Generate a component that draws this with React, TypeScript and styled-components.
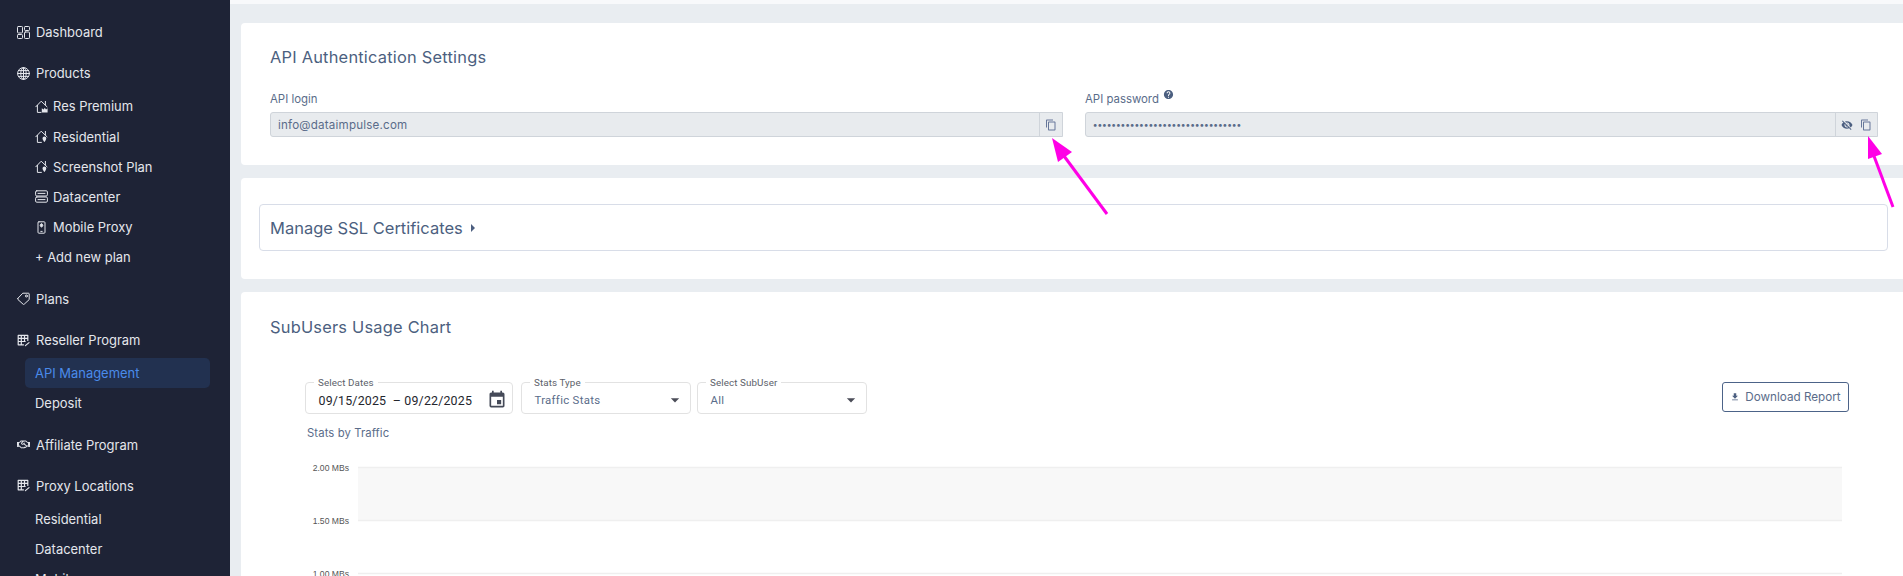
import React from 'react';
import styled, { createGlobalStyle } from 'styled-components';
import { MdArrowDropDown, MdContentCopy, MdEvent, MdFileDownload, MdHelp, MdVisibilityOff } from 'react-icons/md';
import { FaRegHandshake } from 'react-icons/fa';

const GlobalStyle = createGlobalStyle`
  html, body { margin: 0; height: 576px; overflow: hidden; background: #e9edf1; }
  body { font-family: Inter, "Liberation Sans", sans-serif; }
  * { box-sizing: border-box; }
`;

const Page = styled.div`
  display: flex;
  height: 576px;
  overflow: hidden;
  position: relative;
`;

const Sidebar = styled.nav`
  width: 230px;
  flex: none;
  background: #1e2336;
  padding: 17px 20px 0 17px;
  display: flex;
  flex-direction: column;
  gap: 11.3px;
  color: #e4e6ec;
  font-size: 12.95px;
`;

const Section = styled.div`
  display: flex;
  flex-direction: column;
`;

const Head = styled.div`
  height: 30px;
  display: flex;
  align-items: center;
  gap: 6px;
  flex: none;

  svg { width: 13px; height: 13px; flex: none; }
`;

const SubList = styled.div`
  display: flex;
  flex-direction: column;
  margin-top: 3px;
`;

const Sub = styled.div<{ $active?: boolean }>`
  height: 30.2px;
  flex: none;
  display: flex;
  align-items: center;
  gap: 5px;
  margin-left: 8px;
  padding-left: 10px;
  border-radius: 5px;
  background: ${p => (p.$active ? '#223150' : 'transparent')};
  color: ${p => (p.$active ? '#4a8bea' : 'inherit')};

  svg { width: 13px; height: 13px; flex: none; }
`;

const Main = styled.main`
  flex: 1;
  min-width: 0;
  display: flex;
  flex-direction: column;
  background: #e9edf1;
`;

const TopStrip = styled.div`
  height: 4px;
  flex: none;
  background: #f8f9fb;
`;

const Cards = styled.div`
  padding: 19px 0 0 11px;
  display: flex;
  flex-direction: column;
  gap: 13px;
`;

const Card = styled.section<{ $h?: number }>`
  background: #fff;
  border-radius: 4px 0 0 4px;
  flex: none;
  height: ${p => (p.$h ? `${p.$h}px` : 'auto')};
`;

const AuthCard = styled(Card)`
  padding: 24px 25px 0 29px;
`;

const Title = styled.h2`
  margin: 0;
  font-size: 16.4px;
  line-height: 20px;
  font-weight: 400;
  color: #4c5f80;
  letter-spacing: 0.22px;
`;

const Fields = styled.div`
  display: grid;
  grid-template-columns: 793px 793px;
  column-gap: 22px;
  margin-top: 22px;
`;

const Field = styled.div`
  display: flex;
  flex-direction: column;
`;

const FieldLabel = styled.label`
  height: 20px;
  display: flex;
  align-items: center;
  font-size: 11.4px;
  color: #5a6c8a;
  gap: 4px;

  svg { width: 11px; height: 11px; color: #4c5f80; margin-top: -10px; }
`;

const InputRow = styled.div`
  margin-top: 3px;
  height: 25px;
  display: flex;
  background: #e8ebee;
  border: 1px solid #cfd4da;
  border-radius: 3px 0 0 3px;
  color: #5a6c8a;
`;

const InputValue = styled.div<{ $dots?: boolean }>`
  flex: 1;
  display: flex;
  align-items: center;
  padding-left: 7px;
  letter-spacing: ${p => (p.$dots ? '0.37px' : '0.2px')};
  font-size: ${p => (p.$dots ? '9px' : '11.6px')};
  font-weight: ${p => (p.$dots ? 700 : 400)};
`;

const InputActions = styled.div`
  flex: none;
  display: flex;
  align-items: center;
  justify-content: center;
  gap: 7px;
  padding: 0 5px;
  border-left: 1px solid #cfd4da;
  color: #66779a;

  svg { width: 12px; height: 12px; display: block; }
`;

const EyeOff = styled(MdVisibilityOff)`
  color: #4c5f80;
`;

const SslCard = styled(Card)`
  padding: 26px 15px 0 18px;
`;

const SslBox = styled.div`
  height: 47px;
  display: flex;
  align-items: center;
  padding-left: 10px;
  gap: 4px;
  border: 1px solid #d8dde8;
  border-radius: 4px;
  font-size: 16.5px;
  color: #4c5f80;
`;

const Caret = styled.span`
  width: 0;
  height: 0;
  margin-left: 4px;
  border-left: 4px solid #4c5f80;
  border-top: 4px solid transparent;
  border-bottom: 4px solid transparent;
`;

const UsageCard = styled(Card)`
  height: 320px;
  padding: 25px 0 0 29px;
`;

const Toolbar = styled.div`
  display: flex;
  align-items: flex-start;
  margin: 45px 54px 0 35px;
`;

const Outlined = styled.div<{ $w: number; $mr: number }>`
  position: relative;
  width: ${p => p.$w}px;
  margin-right: ${p => p.$mr}px;
  height: 32px;
  flex: none;
  display: flex;
  align-items: center;
  justify-content: space-between;
  padding: 4px 12px 0 12.5px;
  border: 1px solid #e2e2e2;
  border-radius: 4px;
  font-family: Roboto, sans-serif;
`;

const Legend = styled.span`
  position: absolute;
  top: -6px;
  left: 8px;
  padding: 0 4px;
  background: #fff;
  font-size: 9.8px;
  line-height: 11px;
  letter-spacing: 0.1px;
  color: #5c5f6a;
`;

const DateText = styled.span`
  font-size: 12.4px;
  letter-spacing: 0.18px;
  color: #24262d;
  white-space: pre;
`;

const CalendarIcon = styled(MdEvent)`
  width: 20px;
  height: 20px;
  margin-right: -6.5px;
  color: #454a58;
`;

const SelectText = styled.span`
  font-size: 11.4px;
  letter-spacing: 0.3px;
  color: #5a6c8a;
`;

const SelectArrow = styled(MdArrowDropDown)`
  width: 20px;
  height: 20px;
  margin-right: -7px;
  color: #4b4d58;
`;

const DownloadBtn = styled.button`
  margin-left: auto;
  width: 127px;
  height: 30px;
  display: flex;
  align-items: center;
  justify-content: center;
  gap: 5px;
  padding: 0;
  background: #fff;
  border: 1px solid #4c6388;
  border-radius: 3px;
  font: 400 11.7px Inter, sans-serif;
  color: #5a6c8a;

  svg { width: 10px; height: 10px; color: #4c5f80; }
`;

const ChartCaption = styled.div`
  margin: 12px 0 0 37px;
  font-size: 11.3px;
  line-height: 14px;
  color: #5a6c8a;
  letter-spacing: 0.1px;
`;

const ChartSvg = styled.svg`
  display: block;
  margin: 21px 0 0 0;
`;

const ArrowOverlay = styled.svg`
  position: absolute;
  left: 0;
  top: 0;
  pointer-events: none;
`;

const HandshakeIcon = styled(FaRegHandshake)`
  width: 13px;
  height: 13px;
`;

const Ic: React.FC<{ children: React.ReactNode }> = ({ children }) => (
  <svg viewBox="0 0 13 13" fill="none" stroke="currentColor" strokeWidth="1" strokeLinejoin="round" strokeLinecap="round">
    {children}
  </svg>
);

const DashIcon = () => (
  <Ic>
    <rect x="0.5" y="0.5" width="5" height="6.5" rx="0.8" />
    <rect x="0.5" y="8.5" width="5" height="4" rx="0.8" />
    <rect x="7.5" y="0.5" width="5" height="4" rx="0.8" />
    <rect x="7.5" y="6" width="5" height="6.5" rx="0.8" />
  </Ic>
);

const GlobeIcon = () => (
  <Ic>
    <circle cx="6.5" cy="6.5" r="5.9" />
    <ellipse cx="6.5" cy="6.5" rx="2.7" ry="5.9" />
    <path d="M6.5.6v11.8M.6 6.5h11.8M1.4 3.6h10.2M1.4 9.4h10.2" />
  </Ic>
);

const HousePin = () => (
  <Ic>
    <path d="M.8 6.8 6.2 1.2l5.8 5.6M2.4 5.4v7h4M10.4 1.4v3.6" />
    <path d="M9.4 6.6a1.9 1.9 0 0 1 1.9 1.9c0 1.3-1.9 3.6-1.9 3.6s-1.9-2.3-1.9-3.6a1.9 1.9 0 0 1 1.9-1.9z" fill="currentColor" stroke="none" />
  </Ic>
);

const HouseCrown = () => (
  <Ic>
    <path d="M.8 6.8 6.2 1.2l5.8 5.6M2.4 5.4v7h3.6M10.4 1.4v3.6" />
    <path d="M6.8 8.2 8.6 9.6l1.2-1.8 1.2 1.8 1.6-1.4v4.4H6.8z" fill="currentColor" stroke="none" />
  </Ic>
);

const ServerIcon = () => (
  <Ic>
    <rect x="0.6" y="0.8" width="11.8" height="5.2" rx="1.2" />
    <rect x="0.6" y="7" width="11.8" height="5.2" rx="1.2" />
    <path d="M3 3.4h7M3 9.6h7" />
  </Ic>
);

const PhoneIcon = () => (
  <Ic>
    <rect x="3" y="0.8" width="7" height="11.4" rx="0.9" />
    <path d="M6.5 3a1.3 1.3 0 0 1 1.3 1.3c0 .9-1.3 2-1.3 2s-1.3-1.1-1.3-2A1.3 1.3 0 0 1 6.5 3z" fill="currentColor" />
    <path d="M5.8 10.4h1.4" />
  </Ic>
);

const TagIcon = () => (
  <Ic>
    <path d="M.9 6.3 5.8 1.2h5.6c.5 0 .8.3.8.8v5.6l-5 4.6c-.4.3-.8.3-1.1 0L1 7.6c-.4-.4-.4-.9-.1-1.3z" />
    <circle cx="9.4" cy="4" r="1" />
  </Ic>
);

const GridIcon = () => (
  <Ic>
    <path d="M6.5 10.8H1.2V1.4h9.6v5M1.2 4.4h9.6M1.2 7.5h7M4.3 1.4v9.4M7.5 1.4v6" strokeWidth="1.2" />
    <path d="m8.4 11.6 3.6-3" strokeWidth="1.2" />
  </Ic>
);

const AUTH_DOTS = '\u2022'.repeat(32);

const Chart = () => {
  const left = 88;
  const width = 1484;
  const rows = [
    { y: 6.5, label: '2.00 MBs' },
    { y: 59.5, label: '1.50 MBs' },
    { y: 112.5, label: '1.00 MBs' }
  ];
  return (
    <ChartSvg width="1633" height="126" viewBox="0 0 1633 126">
      <rect x={left} y={6} width={width} height={53} fill="#f8f8f8" />
      {rows.map(r => (
        <g key={r.label}>
          <line x1={left} x2={left + width} y1={r.y} y2={r.y} stroke="#efefef" strokeWidth="1.5" />
          <text x={79} y={r.y + 3} textAnchor="end" fontSize="8.6" fill="#555" fontFamily="'Liberation Sans', sans-serif">
            {r.label}
          </text>
        </g>
      ))}
    </ChartSvg>
  );
};

export default function App(): React.ReactElement {
  return (
    <Page>
      <GlobalStyle />
      <Sidebar>
        <Section>
          <Head><DashIcon />Dashboard</Head>
        </Section>
        <Section>
          <Head><GlobeIcon />Products</Head>
          <SubList>
            <Sub><HouseCrown />Res Premium</Sub>
            <Sub><HousePin />Residential</Sub>
            <Sub><HousePin />Screenshot Plan</Sub>
            <Sub><ServerIcon />Datacenter</Sub>
            <Sub><PhoneIcon />Mobile Proxy</Sub>
            <Sub>+ Add new plan</Sub>
          </SubList>
        </Section>
        <Section>
          <Head><TagIcon />Plans</Head>
        </Section>
        <Section>
          <Head><GridIcon />Reseller Program</Head>
          <SubList>
            <Sub $active>API Management</Sub>
            <Sub>Deposit</Sub>
          </SubList>
        </Section>
        <Section>
          <Head><HandshakeIcon />Affiliate Program</Head>
        </Section>
        <Section>
          <Head><GridIcon />Proxy Locations</Head>
          <SubList>
            <Sub>Residential</Sub>
            <Sub>Datacenter</Sub>
            <Sub>Mobile</Sub>
          </SubList>
        </Section>
      </Sidebar>

      <Main>
        <TopStrip />
        <Cards>
          <AuthCard $h={142}>
            <Title>API Authentication Settings</Title>
            <Fields>
              <Field>
                <FieldLabel>API login</FieldLabel>
                <InputRow>
                  <InputValue>info@dataimpulse.com</InputValue>
                  <InputActions><MdContentCopy /></InputActions>
                </InputRow>
              </Field>
              <Field>
                <FieldLabel>API password <MdHelp /></FieldLabel>
                <InputRow>
                  <InputValue $dots>{AUTH_DOTS}</InputValue>
                  <InputActions><EyeOff /><MdContentCopy /></InputActions>
                </InputRow>
              </Field>
            </Fields>
          </AuthCard>

          <SslCard $h={101}>
            <SslBox>Manage SSL Certificates <Caret /></SslBox>
          </SslCard>

          <UsageCard>
            <Title>SubUsers Usage Chart</Title>
            <Toolbar>
              <Outlined $w={208} $mr={8}>
                <Legend>Select Dates</Legend>
                <DateText>09/15/2025  – 09/22/2025</DateText>
                <CalendarIcon />
              </Outlined>
              <Outlined $w={170} $mr={6}>
                <Legend>Stats Type</Legend>
                <SelectText>Traffic Stats</SelectText>
                <SelectArrow />
              </Outlined>
              <Outlined $w={170} $mr={0}>
                <Legend>Select SubUser</Legend>
                <SelectText>All</SelectText>
                <SelectArrow />
              </Outlined>
              <DownloadBtn><MdFileDownload />Download Report</DownloadBtn>
            </Toolbar>
            <ChartCaption>Stats by Traffic</ChartCaption>
            <Chart />
          </UsageCard>
        </Cards>
      </Main>

      <ArrowOverlay width="1903" height="576" viewBox="0 0 1903 576">
        <path d="M1052 138 1072 152 1058 162z" fill="#ff00e6" />
        <path d="M1064 156 1107 214" stroke="#ff00e6" strokeWidth="3" />
        <path d="M1868 136 1882 154 1868 159z" fill="#ff00e6" />
        <path d="M1874 156 1893 207" stroke="#ff00e6" strokeWidth="3" />
      </ArrowOverlay>
    </Page>
  );
}
